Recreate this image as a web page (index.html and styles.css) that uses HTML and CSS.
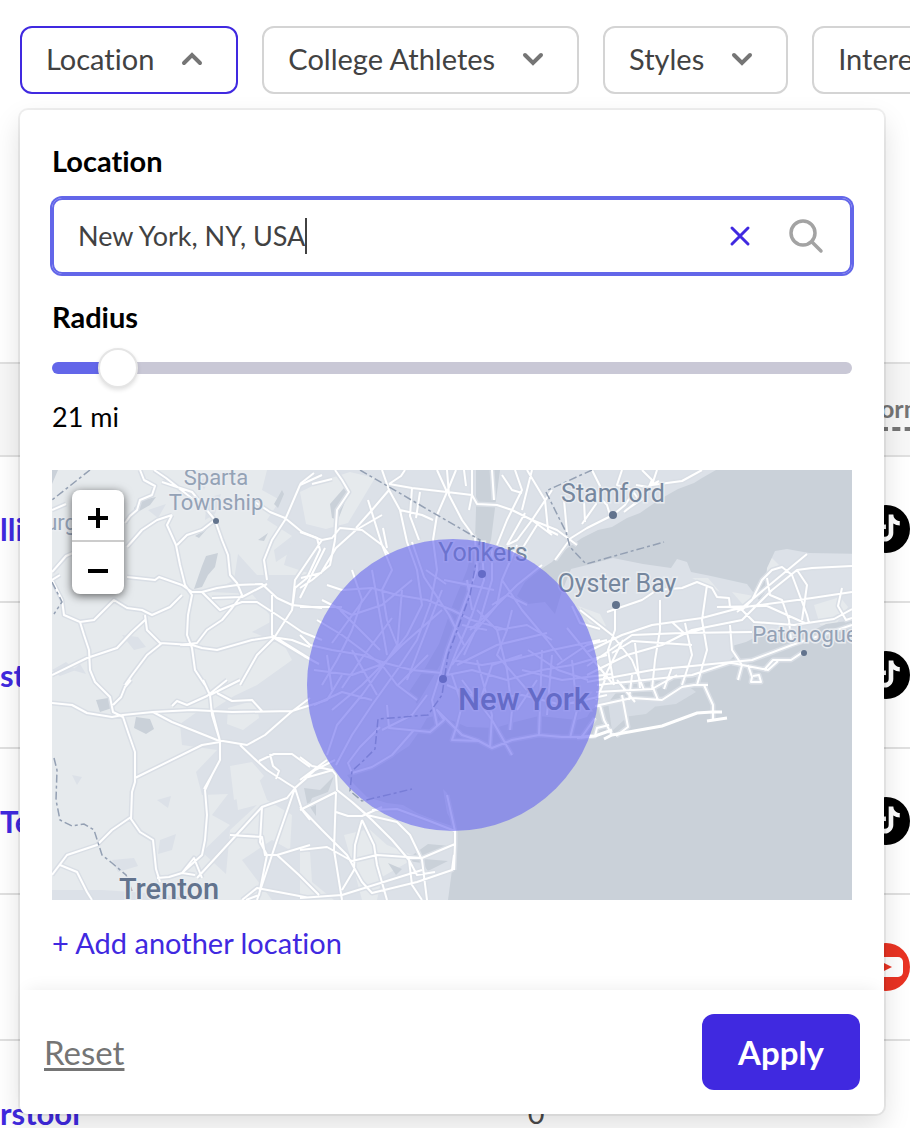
FILE: index.html
```
<!DOCTYPE html>
<html lang="en">
<head>
	<meta charset="UTF-8">
	<meta name="viewport" content="width=device-width, initial-scale=1">
	<title>Location filter</title>
	<link rel="stylesheet" href="styles.css">
</head>
<body>
	<svg class="defs" width="0" height="0" aria-hidden="true">
		<symbol id="chevron" viewBox="0 0 24 16">
			<path d="M4 4l8 8 8-8" fill="none" stroke="#757575" stroke-width="4" stroke-linecap="round"/>
		</symbol>
		<symbol id="tiktok" viewBox="0 0 48 48">
			<circle cx="24" cy="24" r="24"/>
			<path transform="translate(8 5) scale(1.5)" fill="#fff" d="M16.6 5.82A4.28 4.28 0 0 1 15.54 3h-3.09v12.4a2.59 2.59 0 0 1-2.59 2.5c-1.42 0-2.6-1.16-2.6-2.6 0-1.72 1.66-3.01 3.37-2.48V9.66c-3.45-.46-6.47 2.22-6.47 5.64 0 3.33 2.76 5.7 5.69 5.7 3.14 0 5.69-2.55 5.69-5.7V9.01a7.35 7.35 0 0 0 4.3 1.38V7.3s-1.88.09-3.24-1.48z"/>
		</symbol>
		<symbol id="youtube" viewBox="0 0 48 48">
			<circle cx="24" cy="24" r="24" fill="#e93323"/>
			<rect x="9" y="14" width="32" height="20" rx="5" fill="#fff"/>
			<path d="M22 20l8 4-8 4z" fill="#e93323"/>
		</symbol>
	</svg>

	<main class="page">
		<nav class="filters">
			<button class="filter active" type="button">Location <svg class="chevron up"><use href="#chevron"/></svg></button>
			<button class="filter" type="button">College Athletes <svg class="chevron"><use href="#chevron"/></svg></button>
			<button class="filter" type="button">Styles <svg class="chevron"><use href="#chevron"/></svg></button>
			<button class="filter" type="button">Interests <svg class="chevron"><use href="#chevron"/></svg></button>
		</nav>

		<table class="results">
			<thead>
				<tr><th class="name"></th><th class="count"></th><th class="platform"><span>orm</span></th></tr>
			</thead>
			<tbody>
				<tr><td><a href="#">lli</a></td><td></td><td class="platform"><svg class="social"><use href="#tiktok"/></svg></td></tr>
				<tr><td><a href="#">st</a></td><td></td><td class="platform"><svg class="social"><use href="#tiktok"/></svg></td></tr>
				<tr><td><a href="#">Te</a></td><td></td><td class="platform"><svg class="social"><use href="#tiktok"/></svg></td></tr>
				<tr><td></td><td></td><td class="platform"><svg class="social"><use href="#youtube"/></svg></td></tr>
				<tr><td><a href="#">rstool</a></td><td>0</td><td class="platform"></td></tr>
			</tbody>
		</table>

		<form class="panel">
			<div class="panel-body">
				<label class="label" for="location">Location</label>
				<div class="field">
					<input id="location" class="location" type="text" value="New York, NY, USA" autocomplete="off">
					<span class="caret"></span>
					<button class="icon-btn clear" type="button" aria-label="Clear">
						<svg width="24" height="24" viewBox="0 0 24 24"><path d="M4 4l16 16M20 4L4 20" fill="none" stroke="#4029e0" stroke-width="3" stroke-linecap="round"/></svg>
					</button>
					<button class="icon-btn" type="button" aria-label="Search">
						<svg width="36" height="36" viewBox="0 0 36 36"><g fill="none" stroke="#a3a3a3" stroke-width="3.5" stroke-linecap="round"><circle cx="15" cy="15" r="12"/><path d="M24 24l9 9"/></g></svg>
					</button>
				</div>

				<label class="label" for="radius">Radius</label>
				<input id="radius" class="slider" type="range" min="10" max="190" value="21" style="--fill: 8%">
				<output class="value" for="radius">21 mi</output>

				<div class="map">
					<svg class="tiles" viewBox="0 0 800 430" preserveAspectRatio="xMidYMid slice">
						<defs>
							<!-- main roads -->
							<path id="roads" d="M0 110L8 105M75 107l28 3 4-3 23 8 10 7h10l15-4 20-3 25-1 15 14 15 7 30 3
								M88 0l4 10 11 6-3 9-12 5-3 10-7 6-5 7 M75 77l15-17 15-10 15-5 M120 45l-5 10 9 20 4 20 5 20 7 10-4 20-1 20 5 13 3 22 10 15
								M110 12l30 10 23 28 7 20 6 15 2 20 7 8 5 12-10 13-10 12-15 10-10 13-17 2 M163 50l-13 10-15 5-10 10
								M0 40l14-6 M0 102l14-16 7-3
								M0 110l10 20 2 15 16 7 4 13 5 15 1 20 5 12 15 15 3 15 10 5 5 15 7 20v30l-3 10-1 27 9 13 13 8 3 29 4 13
								M28 152l14-2 20-20 13 8 15 2 10 5 18-8 12-12 M93 145l2 15 13 13 32 2 10 3 15 2 35-10 20-3 20 3 18 7 
								M0 205l35-17 30-10 15-16 13-12 M73 215l7-10 15-20 15-12 M150 122l18 18 22-8h15l20 13 25 17 20 8
								M160 128l30-1 25-13 M102 0l12 8 28 22 M200 30l18 12 15 6 17 14 15 6 3 12-13 28-12 10-3 22-18 28-17 17-17 30
								M233 50l-13 20-8 20 3 20M233 50l15-35 22-10 M270 70l-27 40-3 30 M220 125v40l40 25 M222 168l30 18 15 8
								M0 233l20 2 15 8 25 4 11-2 30-3 39-2 40 2 60-1 35-11 15-25 M61 235l8-8 4-10 6-7 M101 242l19 10 45 18 30 5 18-10 25-22 20-15
								M151 210l7 15 2 20 8 26v19l-8 15-7 15 2 25-2 25-3 15-20 18 M160 240l8 31 M160 305l-8 14 M83 308l67-33 18-3
								M120 236l5-5 10 4 20-9 20-16 M165 223l15 8 20-1 10 11 M158 225l30-15 M188 275l17 16 10 9 20 13 8 5 M207 291l15-7h18l18 13
								M243 318l15-13 M243 318l-18 52-10 30-10 30 M145 408l33-36 32-35 25-9 8-10 7 22 8 10 M178 365l32 2 3 18h12l33-10
								M0 405l15-20 30-10 15-15 19-13 M8 395l17 7 10 20 5 8 M190 430l15-12 53 10 M210 337l-2 35 7 13-8 40-13 5 M243 318l20-18 20-10
								M218 284l3 12 6 5-3 8 M130 403l12-15 8 20 M105 408l12-1 13-4 13 2 
								M225 385l22 20 20 20 M248 287l12 9 20 4 4 5 M248 310l27-20 M253 308l28-8 M284 305l1 15 15 12 20 18 20 20 17 20 3 25 10 15
								M284 322l-2 58 8 50 M248 340l36-18 M248 337l22 23 25 25 15 27 10 11 45-11 35-12 2-15 M300 332l15 13 30 7 13 13 12 25 5 40
								M310 350l-7 25-1 25-12 20 M284 342l12 4h14l20-9 M248 380l27-3 25 14 25-6 45 3 33-14 M403 361v13l-1 26
								M310 350l12 25 3 20 10 35 M248 428l42-3 80-25 M320 340l25-1 30 11 28 11-8-36 M357 390l8 15 18-3"/>
							<path id="metro" d="M248 62l22 8 10-2 8-10 22 2 20 15 7 10 M283 70l-5 25-18 15-12 8 M283 70l2-30 12-18-7-12-7-10 M260 14l20-5 M248 14l14-11
								M304 58l16-18 17-20-7-20 M337 14l23 4 35 4 25 3 5 9 20 1 15 5 20 10 25 10 20 15 M337 20l11 20 7 32 M348 40l22 5 11 5
								M337 14l12-8 4-6 M395 22l-10 23-4 25 M395 0l2 25 13 25 13 18 M385 0l10 22 9-22 M420 0v25l-3 15 M412 0l2 16 M440 0l2 30 M463 0l7 20-15 30-10 25
								M480 0l-10 40 M480 50l-15 20-10 5 M500 20l-20 30 20 15 M485 55l-22 35 M473 43l-18 32 M475 0l18 30 3 30 10 5 M450 5l10 15 10 3
								M330 45l-26 15-20 18-15 25-20 5 M331 58l4 20 M360 18l-2 28 9 24 M316 30l14 45 M368 22l-4 26 M248 137h42 M248 165l10 10 M248 128l25-50
								M258 175l22 5 30 5 23 8 27 7 30 3 M275 115l15 5 30-2 25 7 30 5 25 10 20 10 35 10 M330 75l10 25-10 20 5 30 10 25-12 18
								M355 72l10 28 5 35-15 30-22 28-23 32-25 30-10 30 M381 70l4 30-7 35-13 35-20 30-25 35-20 30-16 30 M360 72l12 35 25 38 15 30
								M423 68l2 32-15 40-15 40-7 25-8 25 5 25 M430 80l2 30-12 35-15 35-10 25 M440 75v35l-12 40-16 35 M465 75l-15 35-5 25-25 30-20 30
								M490 95l-25 20-25 25-22 20 M265 150l25 15 20 15 20 15 15 20 20 15 M270 130l30 15 30-10 30-25 M300 100l10 30-10 30-15 30-15 25
								M262 200l38 5 33-12 M280 240l30-25 40-40 40-35 M262 235l28-13 30 8 M395 205l25-5 35 10 35-10 30-5 35-10 M400 190l30 5 30-5 40-10 48-10
								M395 215l35 15 40-5 40 10 45-10 M400 205l10 30-5 20-5 15 28 1 M445 160l10 40 5 40-2 20 M425 190l15 55-2 33 M335 235l2 23 41 4 14-12-7-10 25 25 15 5 15 8 20-8 27-5 23 2h25
								M490 180l-3 85 M520 190l5 50-7 28 M375 225l-15 20-30 15 M410 210l30 40 20 35 M300 303l20-6 20-12 22-25 M300 303l-4-10 12-16 20-20
								M450 110l20 30 25 30 15 20 M440 135l15-10 20 10 M425 140l20 20 30-5 25 15 M460 140l-5 20-10 25 30 35 M465 240l20-30 M500 185l-5 60 M430 225l10-30 30-10
								M346 215l30-30 M350 120l-5 60 M390 120l-35 90 M288 140l40 40 M290 218l20-30 30-40 M300 180l25 45 M275 185l5 35 M320 100l15 85 M320 118l-40 55
								M505 195l30-20 20-5 M470 200l40 10 50-6 M476 180l30 20 30 10 M405 195l40-20 50-12 M410 155l25 5 M392 110l50 10 M374 100l20 14 M415 110l5 30
								M535 182l35-17 30-10 50-7 30-8 20-4 60-8 40-6 M535 196l45-31 50-2 70-1 M535 205l40-20 35-10 30-15 50-10 30-30 25-20 15-2 40-2
								M563 140v20l-7 20 6 35 M555 142l35-12 15-10 25-2 15-6 15 6 5 9 12 1 1 9 12 3 10-10 10-20 10-10 10-3 10 8 15 40 2 8
								M608 130v30l-5 30-3 30 M655 115l-5 35 5 30-10 35 M715 108l3 17 12 5 7 20 2 20 M745 100l10 15-5 35 M528 140l32 25 20 25 12 30 M520 136l8 17 20 6
								M535 212l65-12 50-5 50-5 40-15 60-20 M545 215l95-10 40-13 M633 153l7 32-10 30 M678 155l2 25 10 15-4 15 M560 183l20-12 60 4
								M696 195l4 12-1 5h10l-2-7-6 1 M790 118l-4 18 8 14 6-2 M690 140l12 12 40 3 40-6 18-10 M712 200l9-10 18 0 12-8 M685 142l70-58 M680 193l36 7 10-9
								M620 152l13 12 20-6 M665 137l50-1 40 18 M583 173l5 45 M571 170l-20 40 M620 197l-8 22 M515 158l45 55
								M543 248l-14 20 M652 215l9 20v16 M548 235l4 15 8 15 M570 225l6 32-12 9 M543 236l37-8 30 2 20-13 12-2h14
								M544 222l56-3 25-14 M580 205l-3 25 M565 210l18 22 M553 210l-9 20 M600 215l6 15 M525 268l18-2 2-8 12-3
								M503 90l16-22 16-10 26-13 12-10 8-12 M540 20l15 15 3 10 M540 0l8 16-4 18-14 20 M570 0l-5 15 15 5 7 10-15 12 M590 0l10 10-8 18-18 12
								M605 0l-5 15 30-4 20-11 M584 15l12 2 11-6 M512 30l3 32 M532 30l1 22"/>
						</defs>
						<rect width="800" height="430" fill="#e6eaed"/>
						<!-- built-up land -->
						<path fill="#dce1e8" d="M215 0L210 20 228 30 215 50 240 66 232 95 262 105 205 105 186 84 182 110 160 122 200 124 222 150 200 162 232 175 240 190 205 215 182 226 160 240 145 242 128 254 130 275 165 280 144 302 150 325 176 324 160 345 178 355 150 382 174 404 178 360 205 335 186 340 184 325 204 300 215 330 240 345 238 380 220 370 190 390 220 430 400 430 403 360 800 200V0z"/>
						<path fill="#e6eaed" d="M248 22l25-12 25-8 25 6-12 20-15 25-22 6-20-5zM292 365l25-6 18 16 30 12-35 20-5 23h-15l-8-30zM248 378l10 4 2 30 22 18h-34zM178 296l22-4 12 14-18 20-12 4zM176 238l28-8 3 18-16 12-16-6zM526 136l22 8 6 12-12 4zM762 135l26-8 8 10-14 20-14-2zM712 188l24-4 20 2-22 8zM640 108l16 0 12 14-16-8zM702 95l18-7 8 8-18 10zM680 122l22 4-8 12z"/>
						<path fill="#dce1e8" d="M0 200l14-8 10 8-16 6zM96 40l18-6-8 14zM155 28l14-4-6 20-10 6zM70 165l16 2 8 10-12 3zM105 330l14-4-3 12zM108 370l16-6-4 16-14 4zM60 390l22-2 4 8-20 6zM0 420l50 0 60 4 30 6H0zM20 305l10 2-5 8zM148 10l10-4-6 14zM222 80l18-14-4 18-12 8zM20 200l8-6 6 10z"/>
						<!-- water -->
						<path fill="#cad1d9" d="M664 0l-14 8-8 5-16 6-16 9-12 8-10 7-13 5-15 9-14 3-16 8-10 7-12 8-8 9-14 9-12 9-9 16 10 8 18-2 10 12 6-20 10-25 20-5 22-6 30 6 28 4 6-9 10 3 4 10 20 4 36 8 12 16 6-8 2-24 8-17 12-2 22 4 60 1V0z"/>
						<path fill="#cad1d9" d="M396 430l4-30 4-30-1-15-8-32-4-4 4 24 8 14-18-6-20-8-14-8-16-2-20-6-14-14-6-8 14-4 22-8 26-17 10-14 8-14 10-3 16 6 14 6 28 1 20-6 24-6 38 4 10-3 5-8 16-6 14-18 50-6 24-2 10-9 20-4 10-10-4-8 14-4 20-10 12 4 16-6 12 4 20-10 28-4 28-12V430z"/>
						<path fill="#cad1d9" d="M424 0h24l-4 30-5 40-10 24-12 32-14 36-12 28-14 24-12 20-8-12 16-24 14-24 14-40 14-34 8-30 1-30zM150 96l4-10 12-3-3 14-7 8-6 12-8 2zM82 38l8-8 14-3-6 8-14 8zM143 66l12-7-8 9zM84 247l14 2 4 10-8 5-12-6zM44 230l12-2 4 10-12 4zM206 70l10-7-4 8zM222 34l8-14 2 4-6 14zM0 0h6L0 14zM278 34l14-16 4 6-10 26-6-2zM252 318l16 2 14-14-6 16-16 6-4 10zM256 334l8-4 0 16zM362 384l14-10 22 2-14 8-12 5 24 2-20 10-6-8-14-2zM336 393l14 6-6 6z"/>
						<path fill="#dce1e8" opacity=".7" d="M556 232l60-6 20-10 8 6-20 12-40 5-24 22zM470 168l30 2 10 16-40 2zM560 236l20-3 24 3-10 8-30 4z"/>
						<use href="#roads" class="casing"/><use href="#metro" class="casing"/>
						<use href="#roads" class="road"/><use href="#metro" class="road"/>
						<path class="barrier" d="M529 267l14-1 17-6M552 269l8-4 50-9 35-13 15-1h10M655 251l20-3"/>
						<!-- state lines -->
						<path class="border" d="M308 0l120 70-10 55-22 60-6 40-14 20-50 4-3 30-12 12-11 10-2 20 12 10 50-12M540 0l-44 20M494 22l20 40 4 15 16 17 78-22M38 0L0 30M2 288l3 12-1 30 4 20 12 6 12-2 10 6 8 25 10 8 14 12 6 16M0 112l10 20-8 12"/>
						<g class="dots">
							<circle cx="164" cy="51" r="3"/><circle cx="561" cy="45" r="4"/><circle cx="564" cy="135" r="4"/><circle cx="752" cy="183" r="3"/><circle cx="430" cy="104" r="4"/><circle cx="391" cy="209" r="4"/>
						</g>
						<g class="places">
							<text class="town" x="164" y="15">Sparta</text>
							<text class="town" x="164" y="40">Township</text>
							<text class="town" x="9" y="60">urg</text>
							<text class="town" x="753" y="172">Patchogue</text>
							<text class="city" x="561" y="32">Stamford</text>
							<text class="city" x="565" y="122">Oyster Bay</text>
							<text class="city" x="431" y="91">Yonkers</text>
							<text class="big" x="472" y="240">New York</text>
							<text class="capital" x="117" y="429">Trenton</text>
						</g>
						<circle class="area" cx="401" cy="215" r="146"/>
					</svg>
					<div class="zoom">
						<button type="button" aria-label="Zoom in"><svg width="20" height="20"><path d="M0 10h20M10 0v20" stroke="#000" stroke-width="4"/></svg></button>
						<button type="button" aria-label="Zoom out"><svg width="20" height="20"><path d="M0 10h20" stroke="#000" stroke-width="4"/></svg></button>
					</div>
				</div>

				<a class="add" href="#">+ Add another location</a>
			</div>
			<div class="panel-footer">
				<button class="reset" type="reset">Reset</button>
				<button class="apply" type="button">Apply</button>
			</div>
		</form>
	</main>
</body>
</html>
```
FILE: styles.css
```
*{
	box-sizing: border-box;
	margin: 0;
	padding: 0;
}
body{
	font-family: Lato, "Liberation Sans", sans-serif;
	font-size: 29px;
	font-variant-ligatures: none;
	line-height: 38px;
	color: #000;
	background: #fff;
}
button, input{
	font: inherit;
	font-variant-ligatures: none;
	color: inherit;
	border: 0;
	background: none;
}
button{
	cursor: pointer;
}
.defs{
	position: absolute;
}
.page{
	position: relative;
	height: 100vh;
	overflow: hidden;
}

/* filter bar */
.filters{
	display: flex;
	gap: 24px;
	padding: 26px 20px 0;
}
.filter{
	flex: none;
	display: flex;
	align-items: center;
	gap: 26px;
	height: 68px;
	padding: 0 32px 2px 24px;
	border: 2px solid #d4d4d4;
	border-radius: 12px;
	color: #424242;
}
.filter.active{
	border-color: #4029e0;
}
.chevron{
	width: 24px;
	height: 16px;
}
.chevron.up{
	transform: rotate(180deg);
}

/* results behind the panel */
.results{
	width: 100%;
	margin-top: 268px;
	border-collapse: collapse;
	table-layout: fixed;
	color: #4a4a4a;
}
.results th{
	height: 93px;
	padding-bottom: 4px;
	background: #f7f7f7;
	border-top: 2px solid #e0e0e0;
	border-bottom: 2px solid #e0e0e0;
	font-size: 25px;
	line-height: 32px;
	text-align: left;
	color: #757575;
}
.results td{
	height: 146px;
	border-bottom: 2px solid #e0e0e0;
}
.results a{
	color: #4029e0;
	font-size: 31px;
	font-weight: 700;
	text-decoration: none;
}
.results .name{
	width: 58%;
}
.results .platform{
	width: 48px;
}
.results .platform span{
	margin-left: 18px;
	padding-bottom: 4px;
	border-bottom: 4px dashed #757575;
}
.social{
	display: block;
	width: 48px;
	height: 48px;
}

/* drop-down panel */
.panel{
	position: absolute;
	top: 110px;
	left: 20px;
	right: 26px;
	background: #fff;
	border-radius: 8px;
	box-shadow: 0 0 0 2px rgba(0,0,0,.06), 0 12px 28px rgba(0,0,0,.13);
}
.panel-body{
	display: flex;
	flex-direction: column;
	padding: 32px 32px 28px;
}
.label{
	margin-bottom: 18px;
	font-weight: 700;
}
.field{
	display: flex;
	align-items: center;
	height: 76px;
	margin-bottom: 24px;
	padding: 0 22px 0 24px;
	border: 2px solid #6366e9;
	border-radius: 10px;
	box-shadow: 0 0 0 2px #6366e9;
	color: #424242;
}
.location{
	field-sizing: content;
	min-width: 0;
	height: 38px;
	font-size: 27px;
	outline: none;
}
.caret{
	width: 2px;
	height: 36px;
	background: #424242;
}
.icon-btn{
	display: flex;
	padding: 4px;
}
.clear{
	margin-left: auto;
	margin-right: 28px;
}
.slider{
	-webkit-appearance: none;
	appearance: none;
	width: 100%;
	height: 28px;
}
.slider::-webkit-slider-runnable-track{
	height: 12px;
	border-radius: 6px;
	background: linear-gradient(to right, #6366e9 var(--fill), #c9c8d6 var(--fill));
}
.slider::-webkit-slider-thumb{
	-webkit-appearance: none;
	width: 40px;
	height: 40px;
	margin-top: -14px;
	border: 2px solid #e5e5e5;
	border-radius: 50%;
	background: #fff;
	box-shadow: 0 2px 4px rgba(0,0,0,.12);
}
.value{
	margin-top: 16px;
	margin-bottom: 34px;
	font-size: 27px;
}
.add{
	align-self: flex-start;
	margin-top: 24px;
	color: #4029e0;
	text-decoration: none;
}

/* map */
.map{
	position: relative;
}
.tiles{
	display: block;
	width: 100%;
	height: 430px;
}
.casing{
	fill: none;
	stroke: #d9dee5;
	stroke-width: 5;
	stroke-linejoin: round;
}
.road{
	fill: none;
	stroke: #fff;
	stroke-width: 2;
	stroke-linejoin: round;
}
.barrier{
	fill: none;
	stroke: #fff;
	stroke-width: 3;
}
.border{
	fill: none;
	stroke: #94a0b3;
	stroke-width: 1.5;
	stroke-dasharray: 8 3 3 3;
}
.dots{
	fill: #62738d;
}
.places text{
	font-family: Roboto, sans-serif;
	text-anchor: middle;
	paint-order: stroke;
	stroke: #e9ecf0;
	stroke-width: 3;
}
.places .town{
	font-size: 22px;
	fill: #94a2b6;
}
.places .city{
	font-size: 25px;
	fill: #76879e;
}
.places .big{
	font-size: 31px;
	font-weight: 500;
	fill: #62738d;
}
.places .capital{
	font-size: 29px;
	font-weight: 500;
	fill: #62738d;
}
.area{
	fill: #6666ee;
	fill-opacity: .6;
}
.zoom{
	position: absolute;
	top: 20px;
	left: 20px;
	width: 52px;
	border-radius: 8px;
	background: #fff;
	box-shadow: 0 2px 10px rgba(0,0,0,.6);
}
.zoom button{
	display: flex;
	align-items: center;
	justify-content: center;
	width: 100%;
	height: 52px;
	padding-top: 6px;
}
.zoom button:first-child{
	border-bottom: 2px solid #ccc;
}

/* footer */
.panel-footer{
	display: flex;
	align-items: center;
	justify-content: space-between;
	padding: 24px;
	border-radius: 0 0 8px 8px;
	box-shadow: 0 -8px 16px -8px rgba(0,0,0,.08);
	font-size: 33px;
}
.reset{
	color: #757575;
	text-decoration: underline;
	text-decoration-thickness: 3px;
	text-underline-offset: 3px;
}
.apply{
	height: 76px;
	padding: 0 36px;
	border-radius: 12px;
	background: #4029e0;
	color: #fff;
	font-weight: 700;
}
```
